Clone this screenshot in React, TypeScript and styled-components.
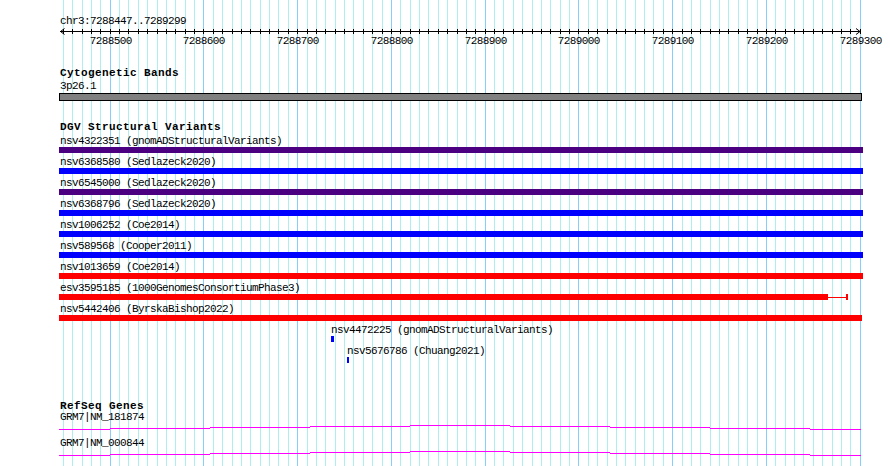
import React from "react";
import styled, { createGlobalStyle } from "styled-components";

// genomic window shown in the panel
const ORIGIN = 7288447;
const END = 7289299;
const PX_PER_BP = 0.9375;
const VIEW_WIDTH = 800;

const toPx = (bp: number) => (bp - ORIGIN) * PX_PER_BP;

interface Feature {
  name: string;
  source: string;
  start: number;
  end: number;
  color: string;
  thickEnd?: number;
}

const variants: Feature[] = [
  { name: "nsv4322351", source: "gnomADStructuralVariants", start: 7280000, end: 7300000, color: "#4b0082" },
  { name: "nsv6368580", source: "Sedlazeck2020", start: 7280000, end: 7300000, color: "#0000ff" },
  { name: "nsv6545000", source: "Sedlazeck2020", start: 7280000, end: 7300000, color: "#4b0082" },
  { name: "nsv6368796", source: "Sedlazeck2020", start: 7280000, end: 7300000, color: "#0000ff" },
  { name: "nsv1006252", source: "Coe2014", start: 7280000, end: 7300000, color: "#0000ff" },
  { name: "nsv589568", source: "Cooper2011", start: 7280000, end: 7300000, color: "#0000ff" },
  { name: "nsv1013659", source: "Coe2014", start: 7280000, end: 7300000, color: "#ff0000" },
  { name: "esv3595185", source: "1000GenomesConsortiumPhase3", start: 7280000, end: 7289288, thickEnd: 7289266, color: "#ff0000" },
  { name: "nsv5442406", source: "ByrskaBishop2022", start: 7280000, end: 7299000, color: "#ff0000" },
  { name: "nsv4472225", source: "gnomADStructuralVariants", start: 7288736, end: 7288739, color: "#0000ff" },
  { name: "nsv5676786", source: "Chuang2021", start: 7288753, end: 7288755, color: "#0000ff" },
];

const genes = ["GRM7|NM_181874", "GRM7|NM_000844"];

// intron line steps (x from, x to, row) relative to view start
const intronSteps: [number, number, number][] = [
  [-1, 50, 6],
  [50, 150, 5],
  [150, 250, 4],
  [250, 350, 3],
  [350, 450, 2],
  [450, 550, 3],
  [550, 650, 4],
  [650, 750, 5],
  [750, 801, 6],
];

const GlobalStyle = createGlobalStyle`
  html, body {
    margin: 0;
    padding: 0;
    background: #ffffff;
  }
  body {
    font-family: "Liberation Mono", "DejaVu Sans Mono", monospace;
  }
`;

const Page = styled.div`
  width: 890px;
  height: 466px;
  overflow: hidden;
  background: #ffffff;
  padding-left: 60px;
  box-sizing: border-box;
`;

const View = styled.div`
  position: relative;
  width: ${VIEW_WIDTH}px;
  height: 466px;
`;

const GridLayer = styled.svg`
  position: absolute;
  left: 0;
  top: 0;
  z-index: 0;
`;

const Content = styled.div`
  position: relative;
  z-index: 1;
  display: flex;
  flex-direction: column;
`;

const MonoText = styled.div<{ $top?: number }>`
  font-family: "Liberation Mono", "DejaVu Sans Mono", monospace;
  font-size: 11px;
  line-height: 11px;
  height: 11px;
  letter-spacing: -0.6px;
  color: #000000;
  white-space: nowrap;
  margin-top: ${(p) => p.$top ?? 0}px;
`;

const TrackTitle = styled(MonoText)`
  font-weight: bold;
  letter-spacing: 0.4px;
`;

const RulerSvg = styled.svg`
  display: block;
  overflow: visible;
`;

const TickLabel = styled.text`
  font-family: "Liberation Mono", "DejaVu Sans Mono", monospace;
  font-size: 11px;
  letter-spacing: -0.6px;
  fill: #000000;
`;

const BandBar = styled.div`
  margin-top: 1px;
  margin-left: -1px;
  width: 801px;
  height: 6px;
  background: #808080;
  border: 1px solid #000000;
`;

const VariantList = styled.div`
  display: flex;
  flex-direction: column;
  padding-top: 3px;
`;

const FeatureRow = styled.div`
  display: flex;
  flex-direction: column;
  height: 21px;
`;

const Glyph = styled.div`
  display: flex;
  align-items: center;
  height: 6px;
`;

const ThickPart = styled.div<{ $color: string }>`
  height: 6px;
  background: ${(p) => p.$color};
  flex: none;
`;

const ThinPart = styled.div<{ $color: string }>`
  height: 1px;
  background: ${(p) => p.$color};
  flex: none;
`;

const EndCap = styled.div<{ $color: string }>`
  width: 2px;
  height: 6px;
  background: ${(p) => p.$color};
  flex: none;
`;

const GeneRow = styled.div`
  display: flex;
  flex-direction: column;
  height: 26px;
`;

const GeneSvg = styled.svg`
  display: block;
  overflow: visible;
`;

const Grid = () => {
  const lines = [];
  for (let bp = 7288450; bp <= 7289300; bp += 10) {
    const x = Math.round(toPx(bp));
    const major = bp % 100 === 0;
    lines.push(
      <rect key={bp} x={x} y={0} width={1} height={466} fill={major ? "#87cefa" : "#aeeeee"} />
    );
  }
  return (
    <GridLayer width={VIEW_WIDTH + 1} height={466} shapeRendering="crispEdges">
      {lines}
    </GridLayer>
  );
};

const Ruler = () => {
  const ticks = [];
  for (let bp = 7288450; bp <= 7289300; bp += 10) {
    const x = Math.round(toPx(bp));
    ticks.push(<rect key={bp} x={x} y={2} width={1} height={5} fill="#000" />);
    if (bp % 100 === 0) {
      ticks.push(
        <TickLabel key={"l" + bp} x={x + 0.8} y={17} textAnchor="middle">
          {bp}
        </TickLabel>
      );
    }
  }
  return (
    <RulerSvg width={VIEW_WIDTH} height={20}>
      <rect x={0} y={4} width={VIEW_WIDTH} height={1} fill="#000" shapeRendering="crispEdges" />
      <g shapeRendering="crispEdges">{ticks}</g>
      <path d="M4.5 1.5 L0.5 4.5 L4.5 7.5" stroke="#000" fill="none" strokeWidth={1} />
      <path d="M796 1.5 L800 4.5 L796 7.5" stroke="#000" fill="none" strokeWidth={1} />
    </RulerSvg>
  );
};

const VariantRow = ({ f }: { f: Feature }) => {
  const left = f.start < ORIGIN ? -1 : Math.round(toPx(f.start));
  const right = f.end > END + 2 ? (f.end > 7299500 ? 803 : 802) : Math.round(toPx(f.end));
  const thickRight = f.thickEnd ? Math.round(toPx(f.thickEnd)) : right;
  return (
    <FeatureRow>
      <MonoText style={{ marginLeft: Math.max(0, left) }}>
        {f.name} ({f.source})
      </MonoText>
      <Glyph style={{ marginLeft: left }}>
        <ThickPart $color={f.color} style={{ width: Math.max(2, thickRight - left) }} />
        {f.thickEnd && (
          <>
            <ThinPart $color={f.color} style={{ width: right - thickRight - 2 }} />
            <EndCap $color={f.color} />
          </>
        )}
      </Glyph>
    </FeatureRow>
  );
};

const IntronLine = () => (
  <GeneSvg width={VIEW_WIDTH} height={15} shapeRendering="crispEdges">
    {intronSteps.map(([a, b, y]) => (
      <rect key={a} x={a} y={y} width={b - a} height={1} fill="#ff00ff" />
    ))}
  </GeneSvg>
);

export default function App() {
  return (
    <>
      <GlobalStyle />
      <Page>
        <View>
          <Grid />
          <Content>
            <MonoText $top={16}>chr3:7288447..7289299</MonoText>
            <Ruler />

            <TrackTitle $top={21}>Cytogenetic Bands</TrackTitle>
            <MonoText $top={2}>3p26.1</MonoText>
            <BandBar />

            <TrackTitle $top={21}>DGV Structural Variants</TrackTitle>
            <VariantList>
              {variants.map((f) => (
                <VariantRow key={f.name} f={f} />
              ))}
            </VariantList>

            <TrackTitle $top={34}>RefSeq Genes</TrackTitle>
            {genes.map((g) => (
              <GeneRow key={g}>
                <MonoText>{g}</MonoText>
                <IntronLine />
              </GeneRow>
            ))}
          </Content>
        </View>
      </Page>
    </>
  );
}
